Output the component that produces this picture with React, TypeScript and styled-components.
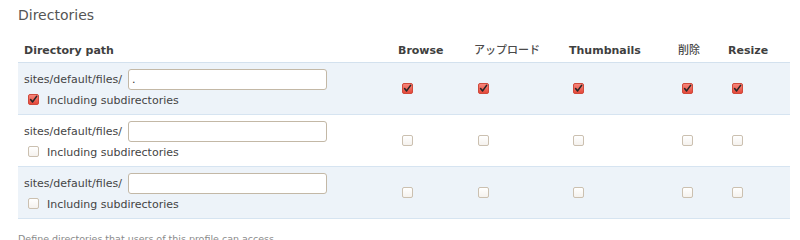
import React from "react";
import styled, { createGlobalStyle } from "styled-components";

const Global = createGlobalStyle`
  html, body { margin: 0; padding: 0; background: #fff; }
  body { font-family: "DejaVu Sans", "Noto Sans CJK JP", sans-serif; }
`;

const Page = styled.div`
  padding: 7px 10px 0 18px;
  font-family: "DejaVu Sans", "Noto Sans CJK JP", sans-serif;
  color: #444;
`;

const Heading = styled.h2`
  margin: 0 0 14px;
  font-size: 14px;
  line-height: 17px;
  font-weight: normal;
  color: #555;
`;

const Table = styled.table`
  width: 772px;
  border-collapse: collapse;
  table-layout: fixed;
  font-size: 11px;
`;

const Th = styled.th<{ $w: number; $cjk?: boolean }>`
  box-sizing: border-box;
  width: ${(p) => p.$w}px;
  text-align: left;
  padding: 6px 6px 5px;
  line-height: 13px;
  font-size: 11px;
  font-weight: ${(p) => (p.$cjk ? 500 : "bold")};
  color: ${(p) => (p.$cjk ? "#4a4a4a" : "#3f3f3f")};
  border-bottom: 1px solid #d3e1ee;
  white-space: nowrap;
`;

const Row = styled.tr<{ $striped: boolean }>`
  background: ${(p) => (p.$striped ? "#edf3f9" : "#ffffff")};
`;

const Td = styled.td`
  padding: 6px 6px 6px;
  border-bottom: 1px solid #d6e4f1;
  vertical-align: middle;
  line-height: 14px;
`;

const PathLine = styled.div`
  display: flex;
  align-items: center;
  gap: 6px;
  height: 21px;
  color: #444;
`;

const PathInput = styled.input`
  width: 199px;
  height: 21px;
  box-sizing: border-box;
  border: 1px solid #c3b8a6;
  border-radius: 3px;
  padding: 0 3px;
  font-family: "DejaVu Sans", sans-serif;
  font-size: 11px;
  color: #333;
  background: #fff;
  outline: none;
`;

const SubLine = styled.div`
  display: flex;
  align-items: flex-start;
  margin-top: 4px;
  height: 14px;
  line-height: 14px;
  padding-left: 4px;
`;

const SubLabel = styled.span`
  margin-left: 8px;
  color: #444;
`;

const Box = styled.span<{ $checked: boolean; $block?: boolean }>`
  display: ${(p) => (p.$block ? "block" : "inline-block")};
  margin-left: ${(p) => (p.$block ? "4px" : "0")};
  width: 11px;
  height: 11px;
  box-sizing: border-box;
  border-radius: 2px;
  border: 1px solid ${(p) => (p.$checked ? "#cf4a3c" : "#cbc0b0")};
  background: ${(p) =>
    p.$checked
      ? "linear-gradient(#f7857a, #e5493b)"
      : "linear-gradient(#ffffff, #f5f2ee)"};
  position: relative;
  flex: none;
`;

const Footer = styled.div`
  margin-top: 14px;
  font-size: 9.5px;
  line-height: 12px;
  color: #8a8a8a;
`;

function Check({ checked, block }: { checked: boolean; block?: boolean }) {
  return (
    <Box $checked={checked} $block={block}>
      {checked && (
        <svg width="11" height="11" viewBox="0 0 11 11" style={{ position: "absolute", left: -1, top: -1 }}>
          <path d="M2.6 5.6 L4.6 7.9 L8.6 2.4" fill="none" stroke="#262626" strokeWidth="1.6" strokeLinecap="round" strokeLinejoin="round" />
        </svg>
      )}
    </Box>
  );
}

const columns: { label: string; w: number; cjk?: boolean }[] = [
  { label: "Browse", w: 76 },
  { label: "アップロード", w: 95, cjk: true },
  { label: "Thumbnails", w: 109 },
  { label: "削除", w: 50, cjk: true },
  { label: "Resize", w: 68 },
];

const rows = [
  { value: ".", checked: true },
  { value: "", checked: false },
  { value: "", checked: false },
];

export default function App() {
  return (
    <Page>
      <Global />
      <Heading>Directories</Heading>
      <Table>
        <thead>
          <tr>
            <Th $w={374}>Directory path</Th>
            {columns.map((c) => (
              <Th key={c.label} $w={c.w} $cjk={c.cjk}>
                {c.label}
              </Th>
            ))}
          </tr>
        </thead>
        <tbody>
          {rows.map((r, i) => (
            <Row key={i} $striped={i % 2 === 0}>
              <Td>
                <PathLine>
                  <span>sites/default/files/</span>
                  <PathInput defaultValue={r.value} />
                </PathLine>
                <SubLine>
                  <Check checked={r.checked} />
                  <SubLabel>Including subdirectories</SubLabel>
                </SubLine>
              </Td>
              {columns.map((c) => (
                <Td key={c.label}>
                  <Check checked={r.checked} block />
                </Td>
              ))}
            </Row>
          ))}
        </tbody>
      </Table>
      <Footer>Define directories that users of this profile can access.</Footer>
    </Page>
  );
}
